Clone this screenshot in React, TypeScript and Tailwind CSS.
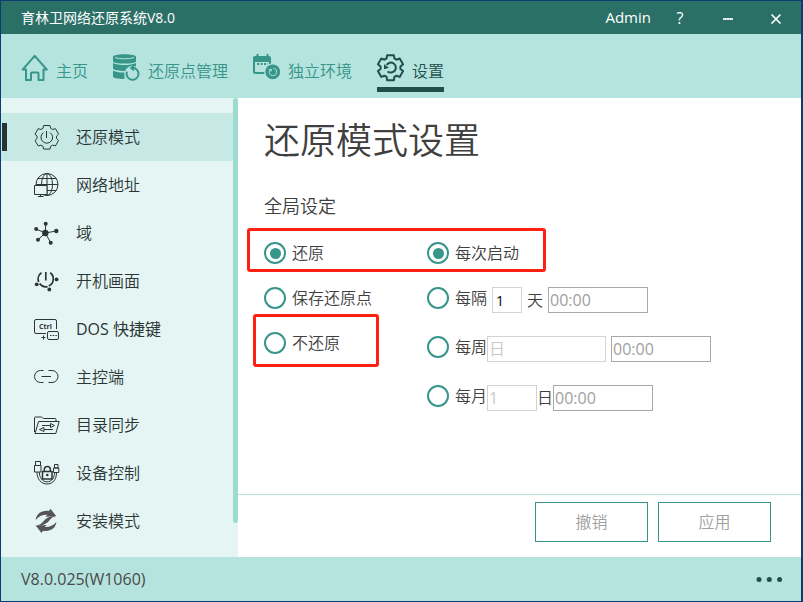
import React, { useState } from 'react';

const gearPath = (cx: number, cy: number, outer: number, inner: number) => {
  const points: string[] = [];
  for (let i = 0; i < 6; i++) {
    const steps = [
      [-23, inner],
      [-15, outer],
      [15, outer],
      [23, inner],
    ];
    steps.forEach(([offset, r]) => {
      const a = ((i * 60 - 90 + offset) * Math.PI) / 180;
      points.push(`${(cx + r * Math.cos(a)).toFixed(2)} ${(cy + r * Math.sin(a)).toFixed(2)}`);
    });
  }
  return `M${points.join('L')}Z`;
};

const NavIcon = ({ children }: { children: React.ReactNode }) => (
  <svg className="h-7 w-7 shrink-0" viewBox="0 0 28 28" fill="none" stroke="currentColor" strokeWidth="2" aria-hidden="true">
    {children}
  </svg>
);

const SideIcon = ({ children }: { children: React.ReactNode }) => (
  <svg className="h-[26px] w-[26px] shrink-0" viewBox="0 0 26 26" fill="none" stroke="currentColor" strokeWidth="1" aria-hidden="true">
    {children}
  </svg>
);

const navItems = [
  {
    label: '主页',
    icon: (
      <NavIcon>
        <path d="M13.7 1.8 1.6 15.6H5V26h5v-6.5a1 1 0 0 1 1-1h5.5a1 1 0 0 1 1 1V26h5V15.6h3.4z" strokeLinejoin="round" />
      </NavIcon>
    ),
  },
  {
    label: '还原点管理',
    icon: (
      <NavIcon>
        <g fill="currentColor" stroke="none">
          <path d="M0 3C0 1.2 5 .3 11.5 .3S23 1.2 23 3v4.3C23 8.8 18 9.6 11.5 9.6S0 8.8 0 7.3z" />
          <path d="M0 9C3 10.5 7 11 11.5 11S20 10.5 23 9v5C20 16 16 17 11.5 17S0 16 0 14.5z" />
          <path d="M0 16.7C3 18 7 18.6 11.5 18.6V25C5 25 0 24 0 22.5z" />
        </g>
        <path d="M2 3.6c5 1.6 14 1.6 19 0" stroke="#b5e3dd" strokeWidth="1" />
        <circle cx="19.5" cy="19.8" r="8" fill="#b5e3dd" stroke="none" />
        <path d="M19.5 13.8a6 6 0 1 1-5.6 3.9" />
        <path d="m21 10.6-4.5 3.3 4.5 3.4z" fill="currentColor" stroke="none" />
      </NavIcon>
    ),
  },
  {
    label: '独立环境',
    icon: (
      <NavIcon>
        <path d="M4.5 0v4M14.5 0v4" />
        <path d="M0 8V4a2 2 0 0 1 2-2h14a2 2 0 0 1 2 2v4z" fill="currentColor" stroke="none" />
        <path d="M1 6v11.5a1.5 1.5 0 0 0 1.5 1.5H12M17 7v3" />
        <path d="M4 10h11" strokeDasharray="2 1.5" />
        <circle cx="19.7" cy="17.8" r="8.6" fill="#b5e3dd" stroke="none" />
        <circle cx="19.7" cy="17.8" r="7.4" fill="currentColor" stroke="none" />
        <path d="M20.5 14.4a3.6 3.6 0 1 1-4 2.6" stroke="#b5e3dd" strokeWidth="1" />
        <path d="m15.3 15.5 3.7-.8-.6 3z" fill="#b5e3dd" stroke="none" />
      </NavIcon>
    ),
  },
  {
    label: '设置',
    icon: (
      <NavIcon>
        <path d={gearPath(13.5, 13.7, 13, 10)} strokeLinejoin="round" />
        <path d="M9.6 11a5 5 0 1 1 1 6.4" />
        <path d="M7 10.2v5l5-1.5z" fill="currentColor" stroke="none" />
      </NavIcon>
    ),
  },
];

const sideItems = [
  {
    label: '还原模式',
    icon: (
      <SideIcon>
        <path d={gearPath(12.8, 13.3, 12.2, 9.8)} strokeLinejoin="round" />
        <path d="M9.5 8.6a5.8 5.8 0 1 0 6.6 0M12.5 7v7" />
      </SideIcon>
    ),
  },
  {
    label: '网络地址',
    icon: (
      <SideIcon>
        <circle cx="13" cy="12.5" r="11" />
        <ellipse cx="13" cy="12.5" rx="5.5" ry="11" />
        <path d="M13 1.5v22M3.5 6.5h19M2 12.5h22M4 18.5h18.5" />
        <path d="M.5 13.5H13v9H.5z" fill="#e5f5f3" />
        <path d="M6.5 22.5v2M4 24.5h5.5" />
      </SideIcon>
    ),
  },
  {
    label: '域',
    icon: (
      <SideIcon>
        <path d="M11.3 13l.4-9M11.3 13 2 9M11.3 13l11-2M11.3 13 4 19.7M11.3 13l5.4 9.7" />
        <g fill="currentColor" stroke="none">
          <circle cx="11.3" cy="13" r="3.2" />
          <circle cx="11.7" cy="3.7" r="2" />
          <circle cx="2.2" cy="9" r="2" />
          <circle cx="22.3" cy="11" r="2.2" />
          <circle cx="4" cy="19.7" r="2" />
          <circle cx="16.7" cy="22.7" r="2" />
        </g>
      </SideIcon>
    ),
  },
  {
    label: '开机画面',
    icon: (
      <SideIcon>
        <g strokeWidth="1.7">
          <path d="M11.8 4v8.5M7.5 4.8A7.6 7.6 0 0 0 4.7 14M5.6 15.6a7.6 7.6 0 0 0 8 3M16.2 4.8a7.6 7.6 0 0 1-1.4 13.1" />
        </g>
        <g fill="currentColor" stroke="none">
          <circle cx="2.7" cy="16.3" r="1.9" />
          <circle cx="22.6" cy="11.4" r="1.9" />
          <circle cx="15.3" cy="21.5" r="1.9" />
        </g>
      </SideIcon>
    ),
  },
  {
    label: 'DOS 快捷键',
    icon: (
      <SideIcon>
        <path d="M12 17.5H2A1.5 1.5 0 0 1 .5 16V5A1.5 1.5 0 0 1 2 3.5h19A1.5 1.5 0 0 1 22.5 5v8" />
        <text x="5" y="12.5" className="font-['Open_Sans',sans-serif] text-[7px] font-bold" fill="currentColor" stroke="none">
          Ctrl
        </text>
        <path d="M9.5 19.5v4M7.5 21.5h4" />
        <rect x="13.5" y="15.5" width="11" height="8" rx="1.5" />
        <path d="M16 19.5h7" strokeDasharray="1.5 1.2" />
      </SideIcon>
    ),
  },
  {
    label: '主控端',
    icon: (
      <SideIcon>
        <path d="M9.5 6.5h-3a6 6 0 0 0 0 12h3M14.5 6.5H18a6 6 0 0 1 0 12h-3.5" />
        <path d="M7.5 12.5H17" />
      </SideIcon>
    ),
  },
  {
    label: '目录同步',
    icon: (
      <SideIcon>
        <path d="M.5 20V6a1 1 0 0 1 1-1h6l2 1.5H21a1 1 0 0 1 1 1V9" />
        <path d="M4.6 9.5h20.6l-3.4 12H1z" strokeLinejoin="round" />
        <path d="M8 13.5h9M10 17.5h9" />
        <path d="M16.5 11.5l4 2-4 2zM10 15.5l-4.5 2 4.5 2z" />
      </SideIcon>
    ),
  },
  {
    label: '设备控制',
    icon: (
      <SideIcon>
        <path d="M1.5 1.5h5v4h-5zM.5 5.5H7V12H.5zM20.5 4.5H24V8h-3.5zM19.5 8h5.3v4.5h-5.3z" />
        <path d="M3 12c0 7 4 12 10 12s9.5-4.5 9.5-11.5M5.3 12c0 5.5 3 9.8 7.7 9.8s7.5-3.8 7.5-9.3" />
        <rect x="8.5" y="11.5" width="9.5" height="7.5" fill="#e5f5f3" strokeWidth="1.5" />
        <path d="M10.3 11V9.5a3 3 0 0 1 6 0V11" strokeWidth="1.5" />
        <circle cx="13.3" cy="15" r="1.3" fill="currentColor" stroke="none" />
      </SideIcon>
    ),
  },
  {
    label: '安装模式',
    icon: (
      <SideIcon>
        <g fill="#555" stroke="none">
          <path d="M1.7 12C2 6 8 1.8 15 3L16.5 .8 22.3 8.3l-11 .5L13.5 6.8C9 6.4 4.5 8.3 1.7 12z" />
          <path d="M22.3 14C22 20 16 24 9 22.7L7.5 25 1.7 17.5l11-.5-2.2 2C15 19.4 19.5 17.6 22.3 14z" />
          <path d="M22 7.5C19 9 17.5 10 15.5 12.2 13 15.5 10 17 2.5 18.3 6 16.5 7.5 15.5 9.5 13.3 12 10.3 14 8.5 22 7.5z" />
        </g>
      </SideIcon>
    ),
  },
];

const radioClass =
  "grid h-[22px] w-[22px] shrink-0 appearance-none place-items-center rounded-full border-2 border-[#37958a] bg-white before:h-[11px] before:w-[11px] before:rounded-full before:content-[''] checked:before:bg-[#37958a]";

const timeClass = 'h-[26px] w-[100px] border border-[#a9a9a9] bg-white px-px text-base font-normal text-[#a0a0a0]';

type RadioProps = {
  name: string;
  label: string;
  checked: boolean;
  onChange: () => void;
};

const Radio = ({ name, label, checked, onChange }: RadioProps) => (
  <label className="flex h-[22px] items-center gap-1.5 whitespace-nowrap leading-[22px]">
    <input type="radio" name={name} checked={checked} onChange={onChange} className={radioClass} />
    {label}
  </label>
);

const TitleBar = () => (
  <header className="flex h-[33px] shrink-0 items-center justify-between bg-[#2b7067] pl-5 pr-px font-normal text-white">
    <span className="text-sm">育林卫网络还原系统V8.0</span>
    <div className="flex h-full items-center">
      <span className="pr-[5px] text-[15px]">Admin</span>
      <button type="button" aria-label="帮助" className="h-full w-12 text-base">
        ?
      </button>
      <button type="button" aria-label="最小化" className="grid h-full w-12 place-items-center">
        <svg className="h-3 w-3" viewBox="0 0 12 12" stroke="currentColor" strokeWidth="1.7">
          <path d="M1 7h10" />
        </svg>
      </button>
      <button type="button" aria-label="关闭" className="grid h-full w-12 place-items-center">
        <svg className="h-3 w-3" viewBox="0 0 12 12" stroke="currentColor" strokeWidth="1.7">
          <path d="m1.5 2.5 9 9M10.5 2.5l-9 9" />
        </svg>
      </button>
    </div>
  </header>
);

const TopNav = () => (
  <nav className="flex h-16 shrink-0 items-end gap-[25px] bg-[#b5e3dd] pb-1.5 pl-5">
    {navItems.map((item, i) => (
      <button
        key={item.label}
        type="button"
        className={
          i === 3
            ? 'flex items-end gap-[7px] border-b-[5px] border-[#1f4f4b] pb-[5px] leading-[22px] text-[#1f4f4b]'
            : 'flex items-end gap-[7px] border-b-[5px] border-transparent pb-[5px] leading-[22px] text-[#37958a]'
        }
      >
        {item.icon}
        {item.label}
      </button>
    ))}
  </nav>
);

const Sidebar = () => {
  const [active, setActive] = useState(0);

  return (
    <aside className="flex w-[237px] shrink-0 bg-[#e5f5f3]">
      <ul className="flex-1 pb-3 pt-[15px]">
        {sideItems.map((item, i) => (
          <li key={item.label} className={i === active ? 'bg-[#c6e9e5]' : ''}>
            <button
              type="button"
              onClick={() => setActive(i)}
              className="flex h-12 w-full items-center pl-px text-left text-[#2b3536]"
            >
              <span className={i === active ? 'mr-[27px] h-7 w-[5px] bg-[#263234]' : 'mr-[27px] h-7 w-[5px]'} />
              {item.icon}
              <span className={item.label.startsWith('DOS') ? 'pl-4 font-normal' : 'pl-4'}>{item.label}</span>
            </button>
          </li>
        ))}
      </ul>
      <div className="mb-[34px] w-[5px] rounded-full bg-[#9ddad2]" />
    </aside>
  );
};

const Settings = () => {
  const [mode, setMode] = useState('restore');
  const [when, setWhen] = useState('boot');

  return (
    <main className="flex min-w-0 flex-1 flex-col bg-white text-[#404040]">
      <div className="flex-1 pl-[26px] pt-[17px]">
        <h1 className="text-4xl leading-[52px]">还原模式设置</h1>
        <h2 className="mt-[27px] text-lg leading-6">全局设定</h2>
        <div className="relative mt-6 flex">
          <div className="flex w-[163px] flex-col gap-[23px]">
            <Radio name="mode" label="还原" checked={mode === 'restore'} onChange={() => setMode('restore')} />
            <Radio name="mode" label="保存还原点" checked={mode === 'save'} onChange={() => setMode('save')} />
            <Radio name="mode" label="不还原" checked={mode === 'none'} onChange={() => setMode('none')} />
          </div>
          <div className="flex flex-col gap-[23px]">
            <Radio name="when" label="每次启动" checked={when === 'boot'} onChange={() => setWhen('boot')} />
            <div className="flex gap-[5px]">
              <Radio name="when" label="每隔" checked={when === 'days'} onChange={() => setWhen('days')} />
              <input
                aria-label="间隔天数"
                defaultValue="1"
                className="h-[26px] w-[30px] border border-[#d3d3d3] px-[3px] text-sm font-normal text-black"
              />
              <span className="leading-[26px]">天</span>
              <input aria-label="每隔时间" defaultValue="00:00" className={timeClass} />
            </div>
            <div className="flex">
              <Radio name="when" label="每周" checked={when === 'week'} onChange={() => setWhen('week')} />
              <select
                aria-label="星期"
                className="mr-[5px] h-[26px] w-[119px] appearance-none border border-[#d3d3d3] px-px text-[#c8c8c8]"
              >
                <option>日</option>
              </select>
              <input aria-label="每周时间" defaultValue="00:00" className={timeClass} />
            </div>
            <div className="flex">
              <Radio name="when" label="每月" checked={when === 'month'} onChange={() => setWhen('month')} />
              <input
                aria-label="日期"
                defaultValue="1"
                className="h-[26px] w-[50px] border border-[#d3d3d3] px-px font-normal text-[#c8c8c8]"
              />
              <span className="leading-[26px]">日</span>
              <input aria-label="每月时间" defaultValue="00:00" className={timeClass} />
            </div>
          </div>
          <div className="pointer-events-none absolute -left-[17px] -top-3.5 h-11 w-[299px] rounded-[3px] border-[3px] border-[#ff2014]" />
          <div className="pointer-events-none absolute -left-[11px] top-[72px] h-[53px] w-[126px] rounded-[3px] border-[3px] border-[#ff2014]" />
        </div>
      </div>
      <div className="flex justify-end gap-2.5 border-t border-[#b5e3dd] pb-[15px] pr-[30px] pt-[7px] text-[#a0a0a0]">
        <button type="button" className="h-10 w-[113px] border border-[#37958a]">
          撤销
        </button>
        <button type="button" className="h-10 w-[113px] border border-[#37958a]">
          应用
        </button>
      </div>
    </main>
  );
};

const App = () => {
  return (
    <div className="flex min-h-screen flex-col border border-r-2 border-[#0b3d73] font-['Open_Sans','Noto_Sans_CJK_SC',sans-serif] text-base font-[350]">
      <TitleBar />
      <TopNav />
      <div className="flex flex-1">
        <Sidebar />
        <Settings />
      </div>
      <footer className="flex h-11 shrink-0 items-center justify-between bg-[#b5e3dd] pl-5 pr-[18px] text-[#4a4a4a]">
        <span className="font-normal">V8.0.025(W1060)</span>
        <button type="button" aria-label="更多" className="text-[#1f4f4b]">
          <svg className="h-2 w-7" viewBox="0 0 28 8" fill="currentColor">
            <circle cx="4" cy="4.5" r="2.5" />
            <circle cx="14.3" cy="4.5" r="2.5" />
            <circle cx="24.6" cy="4.5" r="2.5" />
          </svg>
        </button>
      </footer>
    </div>
  );
};

export default App;
